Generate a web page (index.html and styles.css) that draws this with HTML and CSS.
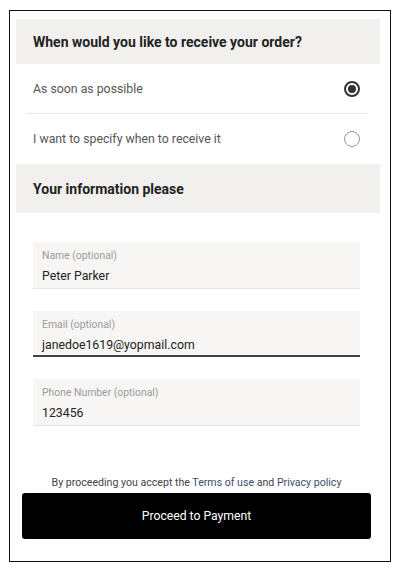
FILE: index.html
```html
<!DOCTYPE html>
<html>
<head>
<meta charset="utf-8">
<link rel="stylesheet" href="styles.css">
</head>
<body>
<div class="frame">
  <div class="section-head">When would you like to receive your order?</div>
  <div class="option">
    <span>As soon as possible</span>
    <span class="radio checked"></span>
  </div>
  <div class="option last">
    <span>I want to specify when to receive it</span>
    <span class="radio"></span>
  </div>
  <div class="section-head second">Your information please</div>
  <div class="form">
    <div class="field">
      <div class="label">Name (optional)</div>
      <div class="value">Peter Parker</div>
    </div>
    <div class="field active">
      <div class="label">Email (optional)</div>
      <div class="value">janedoe1619@yopmail.com</div>
    </div>
    <div class="field">
      <div class="label">Phone Number (optional)</div>
      <div class="value">123456</div>
    </div>
  </div>
  <div class="footer">
    <p class="terms">By proceeding you accept the <a href="#">Terms of use</a> and <a href="#">Privacy policy</a></p>
    <button class="pay">Proceed to Payment</button>
  </div>
</div>
</body>
</html>
```

FILE: styles.css
```css
* { box-sizing: border-box; }
html, body { margin: 0; padding: 0; background: #fff; }
body { font-family: Roboto, "Liberation Sans", Arial, sans-serif; }
.frame {
  margin: 10px 0 0 9px;
  width: 382px;
  height: 552px;
  border: 1px solid #111;
  display: flex;
  flex-direction: column;
  padding: 8px 10px 0 6px;
}
.section-head {
  background: #f1f0ee;
  height: 45px;
  display: flex;
  align-items: center;
  padding-left: 17px;
  font-size: 14px;
  font-weight: 700;
  color: #222;
}
.section-head.second { height: 49px; }
.option {
  height: 50px;
  margin: 0 12px 0 10px;
  border-bottom: 1px solid #e6e6e6;
  display: flex;
  align-items: center;
  justify-content: space-between;
  padding: 0 0 0 7px;
  font-size: 12.3px;
  color: #555;
}
.option.last { border-bottom: none; }
.radio {
  width: 16px;
  height: 16px;
  border-radius: 50%;
  border: 1.5px solid #999;
  margin-right: 8px;
  display: flex;
  align-items: center;
  justify-content: center;
}
.radio.checked { border: 2px solid #333; }
.radio.checked::after {
  content: "";
  width: 8px;
  height: 8px;
  border-radius: 50%;
  background: #333;
}
.form {
  display: flex;
  flex-direction: column;
  gap: 22px;
  padding: 29px 20px 0 17px;
}
.field {
  background: #f7f6f5;
  height: 47px;
  border-bottom: 1px solid #e4e4e4;
  padding: 7px 9px 0 9px;
}
.field.active { height: 46px; border-bottom: 2px solid #444; }
.label { font-size: 10.4px; color: #9a9a9a; line-height: 14px; }
.value { font-size: 12.3px; color: #222; line-height: 18px; margin-top: 4px; }
.footer {
  margin-top: auto;
  padding: 0 0 22px 6px;
  display: flex;
  flex-direction: column;
  align-items: flex-start;
}
.terms {
  width: 349px;
  margin: 0 0 2px 0;
  text-align: center;
  font-size: 10.6px;
  color: #444;
  line-height: 16px;
}
.terms a { color: #3b4d6e; text-decoration: none; }
.pay {
  height: 46px;
  width: 349px;
  background: #000;
  color: #fff;
  border: none;
  border-radius: 3px;
  font-family: Roboto, "Liberation Sans", Arial, sans-serif;
  font-size: 12.2px;
}
```
